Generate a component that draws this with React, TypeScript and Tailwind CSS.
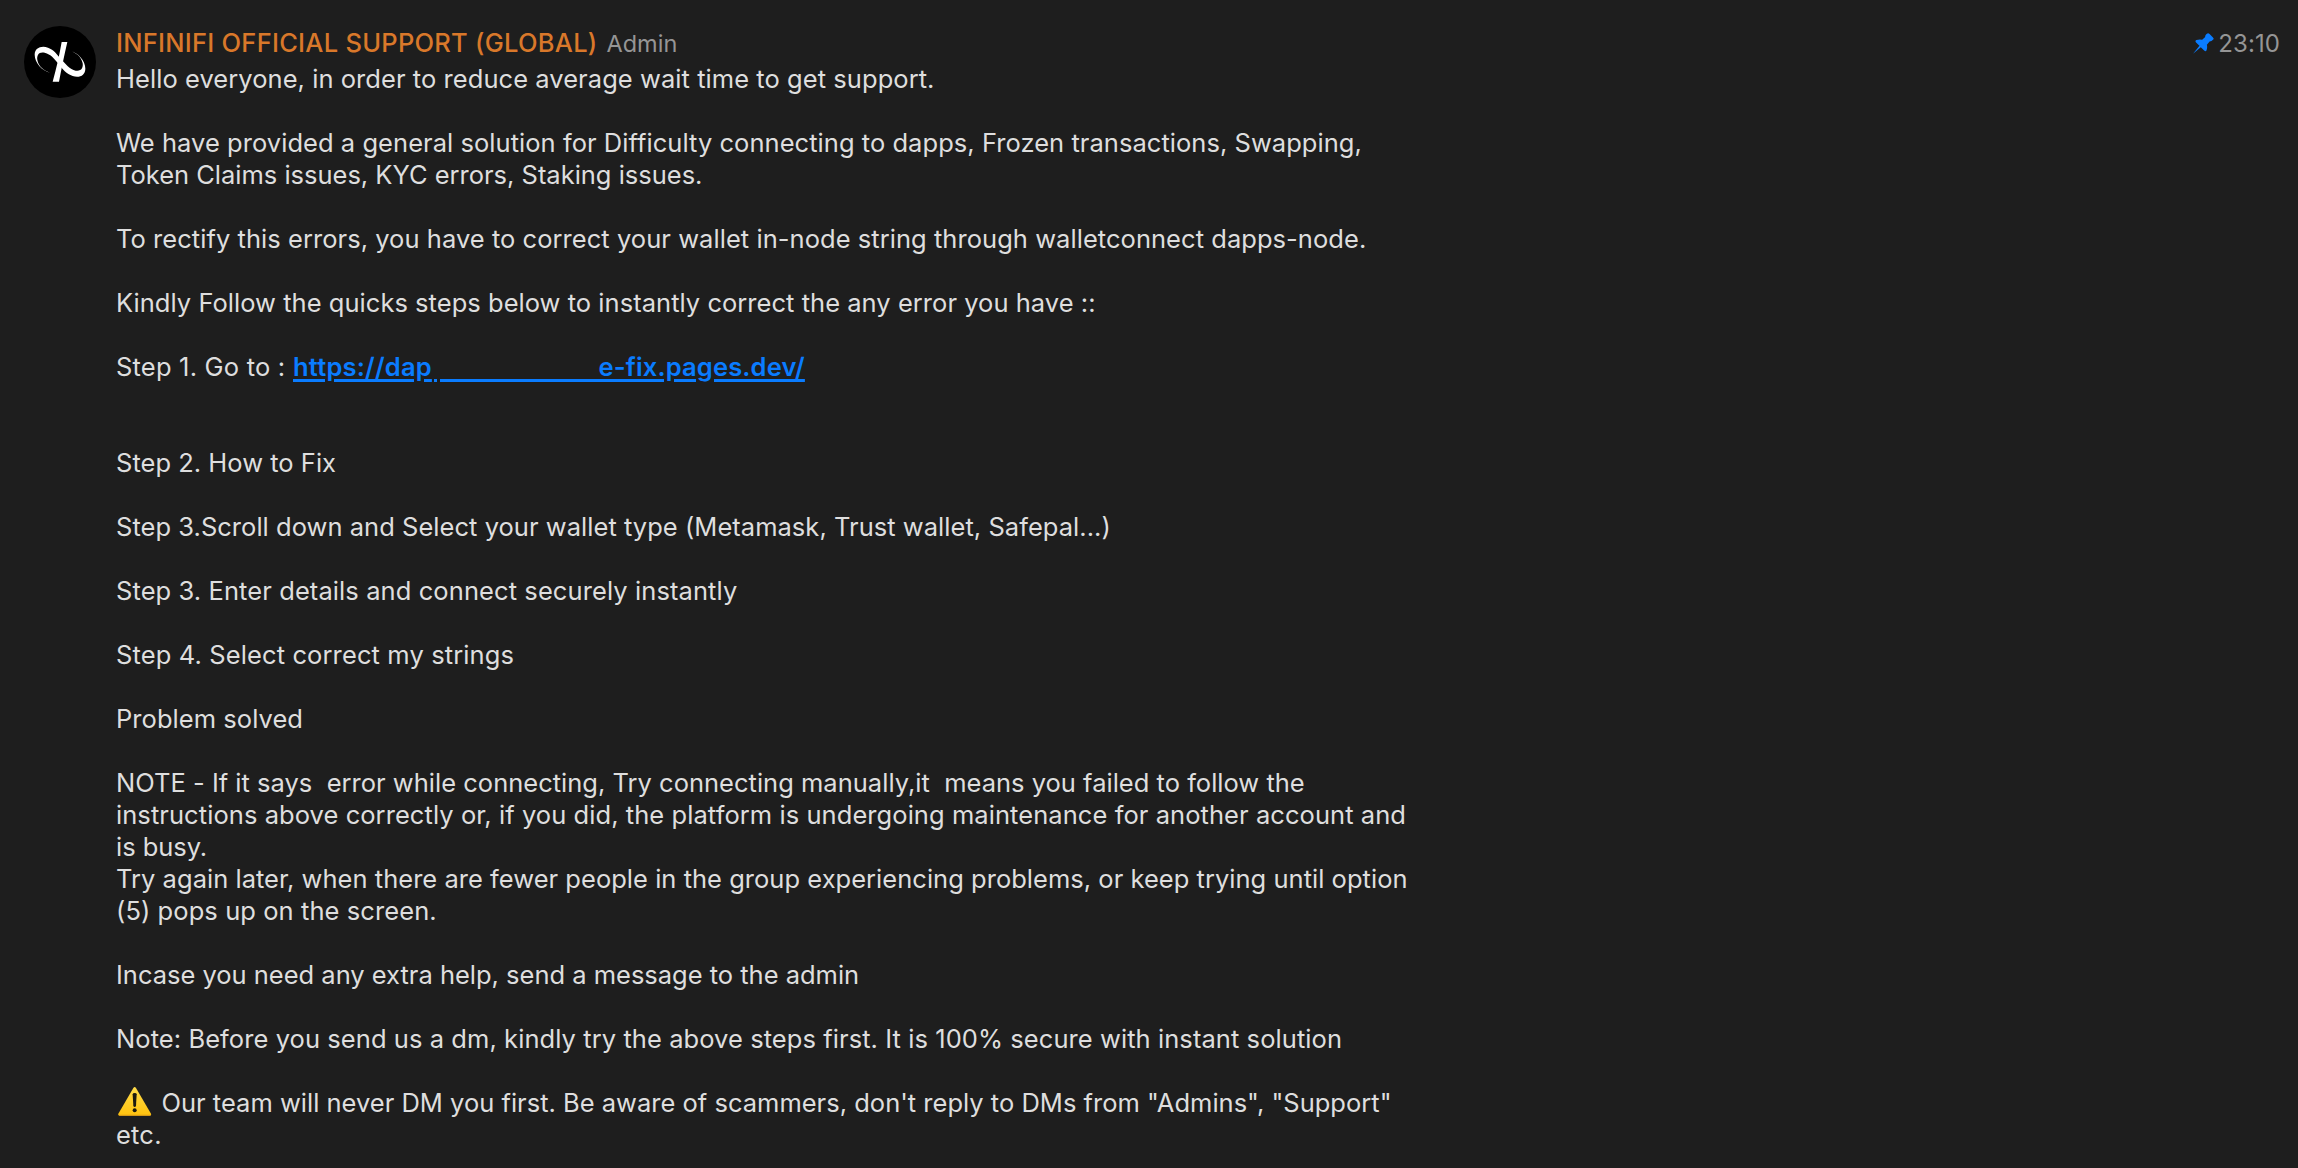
type Line = { text?: string; tracking?: string; kind?: "link" | "warning" };

const lines: Line[] = [
  { text: "Hello everyone, in order to reduce average wait time to get support.", tracking: "tracking-[0.057px]" },
  {},
  { text: "We have provided a general solution for Difficulty connecting to dapps, Frozen transactions, Swapping,", tracking: "tracking-[0.043px]" },
  { text: "Token Claims issues, KYC errors, Staking issues.", tracking: "tracking-[-0.01px]" },
  {},
  { text: "To rectify this errors, you have to correct your wallet in-node string through walletconnect dapps-node.", tracking: "tracking-[0.046px]" },
  {},
  { text: "Kindly Follow the quicks steps below to instantly correct the any error you have ::", tracking: "tracking-[0.034px]" },
  {},
  { text: "Step 1. Go to :", tracking: "tracking-[0.2px]", kind: "link" },
  {},
  {},
  { text: "Step 2. How to Fix", tracking: "tracking-[0.02px]" },
  {},
  { text: "Step 3.Scroll down and Select your wallet type (Metamask, Trust wallet, Safepal...)", tracking: "tracking-[0.035px]" },
  {},
  { text: "Step 3. Enter details and connect securely instantly", tracking: "tracking-[0.09px]" },
  {},
  { text: "Step 4. Select correct my strings", tracking: "tracking-[0.12px]" },
  {},
  { text: "Problem solved", tracking: "tracking-[0.05px]" },
  {},
  { text: "NOTE - If it says  error while connecting, Try connecting manually,it  means you failed to follow the", tracking: "tracking-[0.01px]" },
  { text: "instructions above correctly or, if you did, the platform is undergoing maintenance for another account and", tracking: "tracking-[0.065px]" },
  { text: "is busy.", tracking: "tracking-[-0.05px]" },
  { text: "Try again later, when there are fewer people in the group experiencing problems, or keep trying until option", tracking: "tracking-[0.025px]" },
  { text: "(5) pops up on the screen.", tracking: "tracking-[0.08px]" },
  {},
  { text: "Incase you need any extra help, send a message to the admin", tracking: "tracking-[-0.01px]" },
  {},
  { text: "Note: Before you send us a dm, kindly try the above steps first. It is 100% secure with instant solution", tracking: "tracking-[0.07px]" },
  {},
  { text: "Our team will never DM you first. Be aware of scammers, don't reply to DMs from \"Admins\", \"Support\"", tracking: "tracking-[0.005px]", kind: "warning" },
  { text: "etc.", tracking: "tracking-[0.2px]" },
];

function Avatar() {
  return (
    <svg className="mt-[26px] size-[72px] shrink-0" viewBox="0 0 216 216">
      <circle cx="108" cy="108" r="108" fill="#000" />
      <path d="M113 48H130C121 86 113 127 105 167H86C97 128 106 88 113 48Z" fill="#fff" />
      <path
        d="M78 140C55 135 32 110 32 86C32 66 52 58 72 65C90 71 99 86 112 100C124 114 137 130 155 134C172 137 178 125 176 112C172 92 157 80 138 74C162 79 184 104 184 128C184 148 166 157 146 150C128 144 115 129 104 114C92 99 80 84 62 80C44 76 38 88 40 102C44 122 60 134 78 140Z"
        fill="#fff"
      />
    </svg>
  );
}

function PinIcon() {
  return (
    <svg className="size-[21px]" viewBox="0 0 62 62" fill="#0a7cff">
      <path d="M0 61L19 38L9 28Q5 23 10 21Q18 18 27 20L36 12Q35 6 41 2Q45 -1 49 3L59 13Q63 17 59 20Q55 25 49 25L41 35Q43 43 40 51Q38 56 33 52L23 42Z" />
    </svg>
  );
}

function WarningIcon() {
  return (
    <svg className="ml-[2px] mr-[9.5px] h-[29px] w-[34px]" viewBox="0 0 102 87">
      <defs>
        <linearGradient id="warn" x1="0" y1="0" x2="0" y2="1">
          <stop offset="0" stopColor="#ffdc4a" />
          <stop offset="1" stopColor="#ffc20d" />
        </linearGradient>
      </defs>
      <path d="M46 3Q50 -3 54 3L99 80Q101 86 95 86H5Q-1 86 1 80Z" fill="url(#warn)" />
      <path d="M2 83Q2 86 5 86H95Q99 86 99 83Z" fill="#d99a1a" />
      <path d="M44 22Q44 18 50 18Q56 18 56 22L54 56Q53 60 50 60Q47 60 46 56Z" fill="#1c1a10" />
      <circle cx="50" cy="70" r="6" fill="#1c1a10" />
    </svg>
  );
}

function RedactedLink() {
  return (
    <span className="flex font-semibold tracking-[0.2px] text-[#0a7cff]">
      <span className="w-[140px] underline decoration-[3px] underline-offset-[3px]">https://dap</span>
      <span className="flex w-[165.5px] gap-[3px] pt-[28px]">
        <span className="ml-[1px] h-[3px] w-[3px] bg-[#0a7cff]" />
        <span className="h-[3px] flex-1 bg-[#0a7cff]" />
      </span>
      <span className="tracking-[0.15px] underline decoration-[3px] underline-offset-[3px]">e-fix.pages.dev/</span>
    </span>
  );
}

function MessageLine({ line }: { line: Line }) {
  if (line.kind === "link") {
    return (
      <div className="flex h-8">
        <span className={`w-[177px] ${line.tracking}`}>{line.text}</span>
        <RedactedLink />
      </div>
    );
  }
  return (
    <div className="flex h-8">
      {line.kind === "warning" && <WarningIcon />}
      <span className={line.tracking}>{line.text}</span>
    </div>
  );
}

export default function App() {
  return (
    <div className="flex h-[1168px] w-full items-start overflow-hidden bg-[#1e1e1e] pl-6 font-['Inter',sans-serif] text-[25.5px] leading-8 text-[#dedede]">
      <Avatar />
      <div className="ml-[20px] flex-1 whitespace-pre pt-[27px]">
        <div className="flex h-9">
          <span className="w-[481.5px] font-[450] tracking-[0.26px] text-[#d9782a]">INFINIFI OFFICIAL SUPPORT (GLOBAL)</span>
          <span className="ml-[9px] mt-px text-[23.5px] text-[#959595]">Admin</span>
        </div>
        {lines.map((line, i) => (
          <MessageLine key={i} line={line} />
        ))}
      </div>
      <div className="flex items-start pr-[18px] pt-[28px]">
        <div className="mr-[4px] mt-[5px]">
          <PinIcon />
        </div>
        <span className="text-[24px] tracking-[0.1px] text-[#959595]">23:10</span>
      </div>
    </div>
  );
}
